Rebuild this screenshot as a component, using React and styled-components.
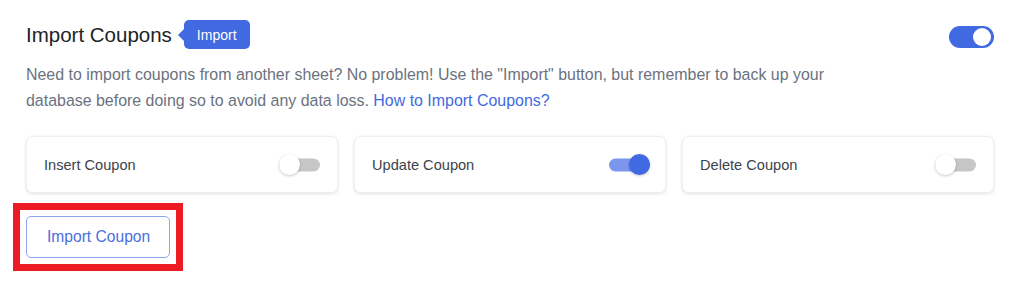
import styled, { createGlobalStyle } from "styled-components";

const GlobalStyle = createGlobalStyle`
  body {
    margin: 0;
    background: #ffffff;
    font-family: "Liberation Sans", Arial, sans-serif;
  }
`;

const Page = styled.div`
  width: 1024px;
  height: 284px;
  box-sizing: border-box;
  padding: 20px 30px 0 26px;
`;

const Header = styled.div`
  display: flex;
  align-items: center;
  justify-content: space-between;
  height: 29px;
`;

const TitleWrap = styled.div`
  display: flex;
  align-items: center;
`;

const Title = styled.h2`
  margin: 0;
  font-size: 20.5px;
  font-weight: 400;
  color: #1d2327;
  line-height: 29px;
`;

const Badge = styled.span`
  position: relative;
  margin-left: 12px;
  height: 29px;
  padding: 0 13px;
  display: flex;
  align-items: center;
  background: #4169e1;
  color: #ffffff;
  font-size: 14px;
  border-radius: 5px;

  &::before {
    content: "";
    position: absolute;
    left: -6px;
    top: 50%;
    margin-top: -6px;
    border-style: solid;
    border-width: 6px 6px 6px 0;
    border-color: transparent #4169e1 transparent transparent;
  }
`;

const Switch = styled.span`
  position: relative;
  display: inline-block;
  flex: none;
  width: ${(p) => (p.$big ? 45 : 41)}px;
  height: ${(p) => (p.$big ? 22 : 23)}px;
  margin-top: ${(p) => (p.$big ? 5 : 0)}px;

  &::before {
    content: "";
    position: absolute;
    left: 0;
    right: 0;
    top: 50%;
    height: ${(p) => (p.$big ? 22 : 13)}px;
    transform: translateY(-50%);
    border-radius: 11px;
    background: ${(p) =>
      p.$big ? "#4169e1" : p.$on ? "#7b96ec" : "#c6c6c6"};
  }

  &::after {
    content: "";
    position: absolute;
    top: ${(p) => (p.$big ? 2 : 1)}px;
    ${(p) => (p.$on ? "right" : "left")}: ${(p) => (p.$big ? 3 : 0)}px;
    width: ${(p) => (p.$big ? 18 : 21)}px;
    height: ${(p) => (p.$big ? 18 : 21)}px;
    border-radius: 50%;
    background: ${(p) => (p.$big || !p.$on ? "#ffffff" : "#4169e1")};
    box-shadow: ${(p) =>
      p.$big ? "none" : "0 1px 3px rgba(0, 0, 0, 0.22)"};
  }
`;

const Text = styled.p`
  margin: 13px 0 0;
  max-width: 850px;
  font-size: 15.95px;
  line-height: 26px;
  color: #6b7280;
`;

const HelpLink = styled.a`
  color: #4169e1;
  text-decoration: none;
`;

const Cards = styled.div`
  display: grid;
  grid-template-columns: repeat(3, 1fr);
  gap: 16px;
  margin-top: 22px;
`;

const Card = styled.div`
  height: 57px;
  box-sizing: border-box;
  display: flex;
  align-items: center;
  justify-content: space-between;
  padding: 0 ${(p) => (p.$on ? 15 : 17)}px 0 17px;
  background: #ffffff;
  border: 1px solid #eef0f3;
  border-radius: 6px;
  box-shadow: 0 1px 3px rgba(30, 40, 70, 0.14);
`;

const CardLabel = styled.span`
  font-size: 14.6px;
  color: #3c434a;
`;

const Highlight = styled.div`
  display: inline-block;
  margin: 10px 0 0 -13px;
  padding: 6px;
  border: 7px solid #ed1c24;
`;

const Button = styled.button`
  display: block;
  height: 42px;
  padding: 0 19px 0 20px;
  background: #ffffff;
  border: 1px solid #8ea4f0;
  border-radius: 5px;
  color: #4a6ee0;
  font-family: "Liberation Sans", Arial, sans-serif;
  font-size: 15.6px;
  cursor: pointer;
`;

const options = [
  { label: "Insert Coupon", on: false },
  { label: "Update Coupon", on: true },
  { label: "Delete Coupon", on: false },
];

export default function App() {
  return (
    <>
      <GlobalStyle />
      <Page>
        <Header>
          <TitleWrap>
            <Title>Import Coupons</Title>
            <Badge>Import</Badge>
          </TitleWrap>
          <Switch $big $on />
        </Header>
        <Text>
          Need to import coupons from another sheet? No problem! Use the
          "Import" button, but remember to back up your database before doing
          so to avoid any data loss.{" "}
          <HelpLink href="#">How to Import Coupons?</HelpLink>
        </Text>
        <Cards>
          {options.map((o) => (
            <Card key={o.label} $on={o.on}>
              <CardLabel>{o.label}</CardLabel>
              <Switch $on={o.on} />
            </Card>
          ))}
        </Cards>
        <Highlight>
          <Button>Import Coupon</Button>
        </Highlight>
      </Page>
    </>
  );
}
